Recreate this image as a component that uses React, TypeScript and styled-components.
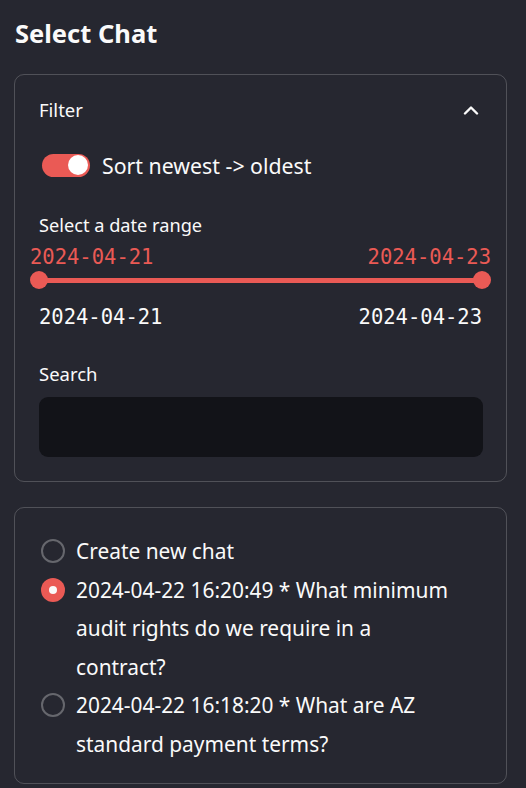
import styled, { createGlobalStyle } from "styled-components";

const RED = "#ea5a55";
const TEXT = "#fafafa";
const BORDER = "rgba(250, 250, 250, 0.2)";

const GlobalStyle = createGlobalStyle`
  body {
    margin: 0;
    background: #262730;
    font-family: "Noto Sans", "Open Sans", sans-serif;
    color: ${TEXT};
  }
`;

const chats = [
  { id: "new", label: "Create new chat" },
  { id: "a", label: "2024-04-22 16:20:49 * What minimum audit rights do we require in a contract?" },
  { id: "b", label: "2024-04-22 16:18:20 * What are AZ standard payment terms?" },
];

const App = () => {
  const selected = "a";

  return (
    <>
      <GlobalStyle />
      <Sidebar>
        <Title>Select Chat</Title>
        <Expander>
          <ExpanderHeader>
            <span>Filter</span>
            <svg width="16" height="10" viewBox="0 0 16 10">
              <path d="M2 8.5 L8 2.5 L14 8.5" fill="none" stroke={TEXT} strokeWidth="2.4" strokeLinecap="round" strokeLinejoin="round" />
            </svg>
          </ExpanderHeader>
          <ExpanderBody>
            <ToggleRow>
              <Toggle>
                <Knob />
              </Toggle>
              <span>Sort newest -&gt; oldest</span>
            </ToggleRow>

            <FieldLabel>Select a date range</FieldLabel>
            <Slider>
              <ValueRow>
                <span>2024-04-21</span>
                <span>2024-04-23</span>
              </ValueRow>
              <TrackWrap>
                <Track />
                <Thumb $side="left" />
                <Thumb $side="right" />
              </TrackWrap>
              <TickRow>
                <span>2024-04-21</span>
                <span>2024-04-23</span>
              </TickRow>
            </Slider>

            <SearchLabel>Search</SearchLabel>
            <SearchInput />
          </ExpanderBody>
        </Expander>

        <RadioBox>
          {chats.map((c) => (
            <RadioItem key={c.id}>
              <RadioDot $checked={c.id === selected} />
              <RadioText>{c.label}</RadioText>
            </RadioItem>
          ))}
        </RadioBox>
      </Sidebar>
    </>
  );
};

const Sidebar = styled.div`
  width: 493px;
  padding: 13px 19px 6px 14px;
  display: flex;
  flex-direction: column;
`;

const Title = styled.h2`
  margin: 0;
  font-size: 25.5px;
  font-weight: 700;
  line-height: 40px;
  padding-left: 1px;
`;

const Expander = styled.div`
  margin-top: 21px;
  border: 1px solid ${BORDER};
  border-radius: 10px;
`;

const ExpanderHeader = styled.div`
  height: 69px;
  display: flex;
  align-items: center;
  justify-content: space-between;
  padding: 0 27px 0 24px;
  font-size: 18.5px;
`;

const ExpanderBody = styled.div`
  padding: 9px 23px 24px 24px;
  display: flex;
  flex-direction: column;
`;

const ToggleRow = styled.div`
  display: flex;
  align-items: center;
  gap: 12px;
  padding-left: 3px;
  font-size: 21.3px;
  height: 24px;
`;

const Toggle = styled.div`
  width: 48px;
  height: 23px;
  border-radius: 12px;
  background: ${RED};
  display: flex;
  align-items: center;
  justify-content: flex-end;
  padding: 0 2px;
  box-sizing: border-box;
`;

const Knob = styled.div`
  width: 20px;
  height: 20px;
  border-radius: 50%;
  background: #fff;
`;

const FieldLabel = styled.div`
  margin-top: 36px;
  font-size: 18.2px;
  line-height: 24px;
`;

const Slider = styled.div`
  display: flex;
  flex-direction: column;
`;

const mono = `"DejaVu Sans Mono", "Liberation Mono", monospace`;

const ValueRow = styled.div`
  display: flex;
  justify-content: space-between;
  margin: 10px -8px 0 -9px;
  font-family: ${mono};
  font-size: 20.5px;
  line-height: 20px;
  color: ${RED};
`;

const TrackWrap = styled.div`
  position: relative;
  height: 18px;
  margin: 4px 1px 0 0;
  display: flex;
  align-items: center;
`;

const Track = styled.div`
  width: 100%;
  height: 5px;
  background: ${RED};
`;

const Thumb = styled.div<{ $side: "left" | "right" }>`
  position: absolute;
  top: 0;
  ${(p) => (p.$side === "left" ? "left: -9px;" : "right: -9px;")}
  width: 18px;
  height: 18px;
  border-radius: 50%;
  background: ${RED};
`;

const TickRow = styled.div`
  display: flex;
  justify-content: space-between;
  margin: 17px 1px 0 0;
  font-family: ${mono};
  font-size: 20.5px;
  line-height: 22px;
`;

const SearchLabel = styled.div`
  margin-top: 34px;
  font-size: 18.5px;
  line-height: 24px;
`;

const SearchInput = styled.div`
  margin-top: 11px;
  height: 60px;
  border-radius: 9px;
  background: #121318;
`;

const RadioBox = styled.div`
  margin-top: 25px;
  border: 1px solid ${BORDER};
  border-radius: 10px;
  padding: 24px 24px 20px 26px;
  display: flex;
  flex-direction: column;
`;

const RadioItem = styled.div`
  display: flex;
  align-items: flex-start;
  gap: 12px;
`;

const RadioDot = styled.div<{ $checked: boolean }>`
  flex: none;
  width: 24px;
  height: 24px;
  margin-top: 7px;
  box-sizing: border-box;
  border-radius: 50%;
  border: ${(p) => (p.$checked ? "none" : "2px solid #66676d")};
  background: ${(p) => (p.$checked ? RED : "transparent")};
  display: flex;
  align-items: center;
  justify-content: center;
  &::after {
    content: "";
    display: ${(p) => (p.$checked ? "block" : "none")};
    width: 8px;
    height: 8px;
    border-radius: 50%;
    background: #fafafa;
  }
`;

const RadioText = styled.div`
  max-width: 385px;
  font-size: 20.9px;
  line-height: 38.5px;
  margin-left: -1px;
`;

export default App;
